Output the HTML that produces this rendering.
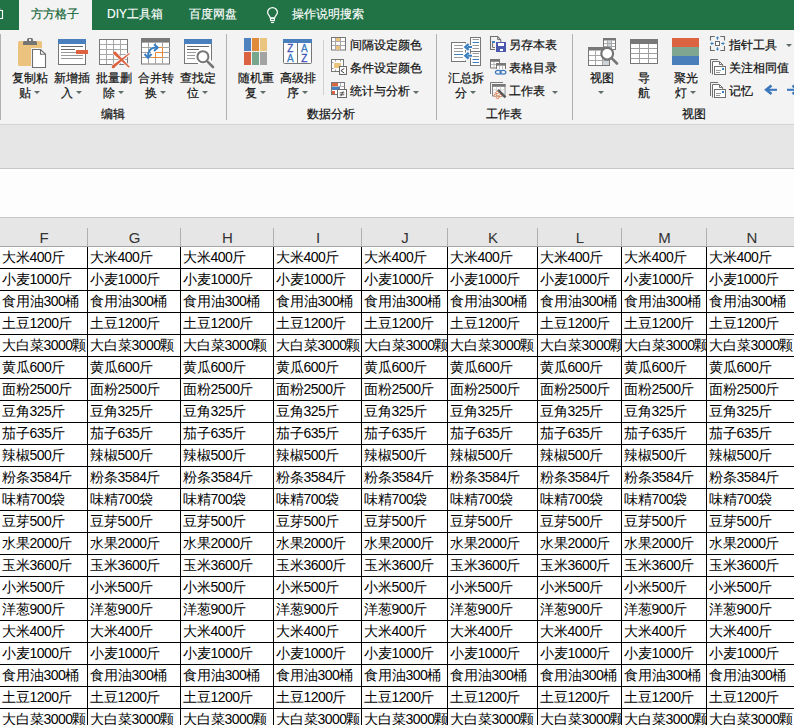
<!DOCTYPE html>
<html><head><meta charset="utf-8"><style>
*{margin:0;padding:0;box-sizing:border-box}
html,body{width:794px;height:725px;overflow:hidden;background:#fff;font-family:"Liberation Sans",sans-serif}
.a{position:absolute}
.t{position:absolute;white-space:nowrap;font-size:12px;line-height:16px;color:#111;-webkit-text-stroke:0.2px #111}
.tab{position:absolute;white-space:nowrap;font-size:12px;line-height:16px;color:#fff;-webkit-text-stroke:0.15px #fff}
.arr{position:absolute;width:0;height:0;border-left:3px solid transparent;border-right:3px solid transparent;border-top:3px solid #5f6d62}
.sep{position:absolute;width:1px;background:#d4d4d4}
.d{letter-spacing:-0.55px}
.cell{position:absolute;white-space:nowrap;font-size:14px;line-height:16px;color:#000;overflow:hidden}
.vl{position:absolute;width:1px;background:#000}
.hl{position:absolute;height:1px;background:#000}
.ch{position:absolute;font-size:15px;line-height:16px;color:#333;text-align:center}
</style></head><body>
<div class="a" style="left:0;top:0;width:794px;height:30px;background:#217346"></div>
<div class="a" style="left:19px;top:0;width:73px;height:31px;background:#f3f3f3"></div>
<svg class="a" style="left:0;top:0" width="6" height="30"><path d="M0 10.5H2.5V18.5H0" fill="none" stroke="#fff" stroke-width="1.1"/><path d="M0 9H0.8" stroke="#aab" stroke-width="1"/></svg>
<div class="tab" style="left:31px;top:6px;color:#1a6b3c;-webkit-text-stroke:0.25px #1a6b3c">方方格子</div>
<div class="tab" style="left:107px;top:6px">DIY工具箱</div>
<div class="tab" style="left:189px;top:6px">百度网盘</div>
<div class="tab" style="left:292px;top:6px">操作说明搜索</div>
<svg class="a" style="left:264px;top:5px" width="18" height="20" viewBox="0 0 18 20"><path d="M6.3 12.8 C6 10.8 3.6 9.6 3.6 7.5 A4.9 4.9 0 0 1 13.4 7.5 C13.4 9.6 11 10.8 10.7 12.8 Z" fill="none" stroke="#fff" stroke-width="1.2"/><rect x="6.6" y="13.6" width="3.8" height="2" fill="none" stroke="#fff" stroke-width="1.1"/><path d="M7 17.5H10" stroke="#fff" stroke-width="1.1"/></svg>
<div class="a" style="left:0;top:30px;width:794px;height:94px;background:#f3f3f3"></div>
<div class="a" style="left:0;top:124px;width:794px;height:1px;background:#d2d2d2"></div>
<div class="a" style="left:0;top:125px;width:794px;height:43px;background:#e6e6e6"></div>
<div class="a" style="left:0;top:168px;width:794px;height:1px;background:#c6c6c6"></div>
<div class="a" style="left:0;top:169px;width:794px;height:48px;background:#fdfdfd"></div>
<div class="a" style="left:0;top:217px;width:794px;height:1px;background:#c6c6c6"></div>
<div class="a" style="left:0;top:218px;width:794px;height:28px;background:#e6e6e6"></div>
<div class="a" style="left:0;top:246px;width:794px;height:1px;background:#a5a5a5"></div>
<div class="sep" style="left:0px;top:34px;height:86px;background:#b0b2b0"></div>
<div class="sep" style="left:226px;top:34px;height:86px;background:#b0b2b0"></div>
<div class="sep" style="left:436px;top:34px;height:86px;background:#b0b2b0"></div>
<div class="sep" style="left:572px;top:34px;height:86px;background:#b0b2b0"></div>
<div class="sep" style="left:323px;top:40px;height:55px;background:#d0d0d0"></div>
<!-- 1 clipboard: origin (18,37) -->
<svg class="a" style="left:18px;top:37px" width="30" height="32" viewBox="0 0 30 32">
<rect x="0" y="4" width="24" height="25" rx="1.5" fill="#ebc37f"/>
<path d="M5 5.5 Q5 4 6.5 4 H17.5 Q19 4 19 5.5 V8 H5 Z" fill="#747474"/>
<rect x="9" y="1" width="6" height="4" rx="1.5" fill="#747474"/>
<rect x="11" y="2" width="2" height="2" fill="#f3f3f3"/>
<path d="M14.5 12.5 H22.5 L27.5 17.3 V30.5 H14.5 Z" fill="#f3f3f3" stroke="#f3f3f3" stroke-width="3"/>
<path d="M14.5 12.5 H22.5 L27.5 17.3 V30.5 H14.5 Z" fill="#fff" stroke="#6e6e6e" stroke-width="1.1" stroke-linejoin="miter"/>
<path d="M22.5 12.5 V17.3 H27.5" fill="none" stroke="#6e6e6e" stroke-width="1.1"/>
</svg>
<!-- 2 insert: origin (57,38) -->
<svg class="a" style="left:57px;top:38px" width="32" height="28" viewBox="0 0 32 28">
<rect x="1.5" y="1.5" width="27" height="25" fill="#fff" stroke="#777" stroke-width="1"/>
<rect x="1" y="1" width="28" height="5" fill="#4a7fbd"/>
<path d="M4 8.5H26M4 11.5H18M4 14.5H19M4 17.5H26M4 20.5H26" stroke="#9a9a9a" stroke-width="1"/>
<path d="M4 8.5H26M4 11.5H18" stroke="#6a6a6a" stroke-width="1"/>
<rect x="19" y="12" width="12" height="4" fill="#dd6340"/>
</svg>
<!-- 3 delete: origin (98,38) -->
<svg class="a" style="left:98px;top:38px" width="34" height="32" viewBox="0 0 34 32">
<rect x="1.5" y="1.5" width="28" height="25" fill="#fff" stroke="#7a7a7a" stroke-width="1"/>
<path d="M8.5 2V26M15.5 2V26M22.5 2V26M2 6.5H29M2 11.5H29M2 16.5H29M2 21.5H29" stroke="#a8a8a8" stroke-width="1"/>
<g stroke="#f8f8f8" stroke-width="1.6" stroke-linejoin="round">
<path d="M15.55 15.97 L17.65 13.83 L31.72 28.87 L30.88 29.73Z" fill="#f8f8f8"/>
<path d="M16.15 29.87 L14.26 27.53 L31.29 15.01 L31.92 15.79Z" fill="#f8f8f8"/>
</g>
<g fill="#dd6340">
<path d="M15.55 15.97 L17.65 13.83 L31.72 28.87 L30.88 29.73Z"/>
<circle cx="16.6" cy="14.9" r="1.5"/>
<path d="M16.15 29.87 L14.26 27.53 L31.29 15.01 L31.92 15.79Z"/>
<circle cx="15.2" cy="28.7" r="1.5"/>
</g>
</svg>
<!-- 4 merge: origin (140,37) -->
<svg class="a" style="left:140px;top:37px" width="32" height="29" viewBox="0 0 32 29">
<rect x="1.5" y="1.5" width="28" height="25.5" fill="#fff" stroke="#767676" stroke-width="1"/>
<rect x="1" y="1" width="29" height="4.6" fill="#797979"/>
<path d="M8.5 5V27M15.5 5V27M22.5 5V27M2 10.5H30M2 15.5H30M2 20.5H30" stroke="#a3a3a3" stroke-width="1"/>
<rect x="11" y="10" width="12" height="11" fill="#fff"/>
<path d="M18.5 10.5H22.5V20.5H11M15.5 20.5V15.5H22.5" fill="none" stroke="#e8893a" stroke-width="1"/>
<path d="M8 20.5 C8 14 10.5 10.6 15.5 10.6 H18" fill="none" stroke="#3a7fc1" stroke-width="2"/>
<path d="M14 7.3 L17.8 10.6 L14 14" fill="none" stroke="#3a7fc1" stroke-width="2"/>
<path d="M4.6 17 L8 20.8 L11.5 17" fill="none" stroke="#3a7fc1" stroke-width="2"/>
</svg>
<!-- 5 find: origin (183,38) -->
<svg class="a" style="left:183px;top:38px" width="34" height="32" viewBox="0 0 34 32">
<rect x="1" y="1" width="28" height="25" fill="#fff"/>
<path d="M1.5 1V26M1 25.5H15M28.5 1V22.5" stroke="#777" fill="none"/>
<rect x="1" y="1" width="28" height="5" fill="#4a7fbd"/>
<path d="M4 8.5H26M4 11.5H16" stroke="#6a6a6a" stroke-width="1"/>
<path d="M4 14.5H13M4 17.5H12M4 20.5H12" stroke="#9a9a9a" stroke-width="1"/>
<circle cx="19.9" cy="18.7" r="5.5" fill="#fff" stroke="#767676" stroke-width="2"/>
<path d="M24.3 23.3 L30 29" stroke="#767676" stroke-width="2.6" stroke-linecap="round"/>
</svg>
<!-- 6 random blocks -->
<svg class="a" style="left:244px;top:38px" width="24" height="28" viewBox="0 0 24 28">
<rect x="0" y="0" width="7" height="13" fill="#4e81bd"/>
<rect x="8" y="0" width="7" height="13" fill="#e08a3b"/>
<rect x="16" y="0" width="7" height="13" fill="#ebc47f"/>
<rect x="0" y="14" width="7" height="13" fill="#dc6341"/>
<rect x="8" y="14" width="7" height="13" fill="#77a68d"/>
<rect x="16" y="14" width="7" height="13" fill="#a3a3a3"/>
</svg>
<!-- 7 sort: origin (282,38) -->
<svg class="a" style="left:282px;top:38px" width="32" height="28" viewBox="0 0 32 28">
<rect x="1.5" y="1.5" width="28" height="24" rx="1" fill="#fff" stroke="#767676" stroke-width="1"/>
<rect x="1" y="1" width="29" height="4" fill="#4a7fbd"/>
<path d="M15.5 5V25.5" stroke="#767676"/>
<g font-family="Liberation Sans" font-size="10" text-anchor="middle" stroke-width="0.3">
<text x="8.3" y="13.8" fill="#3f4fb3" stroke="#3f4fb3">Z</text>
<text x="8.3" y="23.8" fill="#3b7cc0" stroke="#3b7cc0">A</text>
<text x="22.3" y="13.8" fill="#3b7cc0" stroke="#3b7cc0">A</text>
<text x="22.3" y="23.8" fill="#3f4fb3" stroke="#3f4fb3">Z</text>
</g>
</svg>
<!-- 8 interval color: origin (330,36) -->
<svg class="a" style="left:330px;top:36px" width="18" height="16" viewBox="0 0 18 16">
<rect x="1.5" y="1.5" width="14" height="12.5" fill="#fff" stroke="#777"/>
<rect x="6" y="2" width="5" height="3.5" fill="#ebc37f"/>
<rect x="6" y="10" width="5" height="3.5" fill="#ebc37f"/>
<path d="M5.5 2V14M10.5 2V14M2 5.5H15M2 9.5H15" stroke="#a8a8a8"/>
</svg>
<!-- 9 cond color: origin (330,58) -->
<svg class="a" style="left:330px;top:58px" width="18" height="18" viewBox="0 0 18 18">
<rect x="1.5" y="1.5" width="12" height="12" fill="#fff" stroke="#777"/>
<path d="M5.5 2V3.5M10.5 2V3.5M2 4.5H3.5M2 10.5H3.5M5.5 11.5V13" stroke="#999"/>
<rect x="4" y="5" width="7" height="5" fill="#ebc37f"/>
<rect x="9.5" y="8.5" width="7" height="8" fill="#fff" stroke="#6a6a6a"/>
<path d="M14.3 10.4 L10.9 12.7 L14.3 15" fill="none" stroke="#444" stroke-width="1"/>
</svg>
<!-- 10 stats: origin (330,81) -->
<svg class="a" style="left:330px;top:81px" width="18" height="18" viewBox="0 0 18 18">
<rect x="1.5" y="1.5" width="13" height="12" fill="#fff" stroke="#777"/>
<rect x="2" y="2" width="6" height="3" fill="#dd6340"/>
<rect x="2" y="6" width="8" height="3" fill="#4a7fbd"/>
<rect x="2" y="10" width="3" height="3" fill="#dd6340"/>
<path d="M10.5 2V5.5M2 5.5H14" stroke="#b0b0b0"/>
<rect x="7.5" y="8.5" width="9" height="8" fill="#fff" stroke="#6a6a6a"/>
<path d="M9.7 11.8H14.3M9.7 13.8H14.3M13.2 10.3L10.8 15.3" fill="none" stroke="#444" stroke-width="0.9"/>
</svg>
<!-- 11 summary split: origin (450,36) -->
<svg class="a" style="left:450px;top:36px" width="32" height="31" viewBox="0 0 32 31">
<rect x="1.5" y="6.5" width="14" height="19" fill="#fff" stroke="#777"/>
<path d="M4 9.5H13M4 12.5H13M4 15.5H13M4 21.5H13" stroke="#9a9a9a"/>
<path d="M4 18.5H13" stroke="#3a7fc1"/>
<rect x="15" y="7.5" width="2" height="17" fill="#f3f3f3"/>
<path d="M15.5 14V16.5" stroke="#777"/>
<rect x="20.5" y="1.5" width="10" height="14" fill="#fff" stroke="#777"/>
<rect x="20.5" y="15.5" width="10" height="14" fill="#fff" stroke="#777"/>
<path d="M22.5 6.5H29M22.5 23.5H29M22.5 26.5H29" stroke="#3a7fc1"/>
<path d="M22.5 3.5H29M22.5 9.5H29M22.5 12.5H29M22.5 17.5H29M22.5 20.5H29" stroke="#9a9a9a"/>
<rect x="19.5" y="9" width="2" height="4" fill="#fff"/><rect x="19.5" y="17.7" width="2" height="4" fill="#fff"/>
<path d="M22 11H17.5M22 19.7H17.5" stroke="#3a7fc1" stroke-width="2"/>
<path d="M18.7 8L15.3 10.9L18.7 13.8M18.7 16.8L15.3 19.7L18.7 22.6" fill="none" stroke="#3a7fc1" stroke-width="2.2"/>
</svg>
<!-- 12 save sheet: origin (489,35) -->
<svg class="a" style="left:489px;top:35px" width="18" height="18" viewBox="0 0 18 18">
<path d="M6 14.5H1.5V1.5H8.7L11.8 5V7" fill="none" stroke="#707070" stroke-width="1.1"/>
<path d="M8.7 2V4.6H11" fill="none" stroke="#707070" stroke-width="1"/>
<rect x="3" y="6" width="3" height="2" fill="#3a7fc1"/>
<path d="M3.6 8V12.5H6" fill="none" stroke="#707070" stroke-width="1"/>
<rect x="7" y="7" width="10" height="10" fill="#4a58b0"/>
<rect x="9" y="8" width="6" height="3" fill="#fff"/>
<rect x="11" y="14" width="3" height="2" fill="#fff"/>
</svg>
<!-- 13 toc: origin (489,58) -->
<svg class="a" style="left:489px;top:58px" width="18" height="18" viewBox="0 0 18 18">
<rect x="1" y="1" width="10" height="9" fill="#fff"/>
<path d="M1.5 1V10H7M10.5 1V5" fill="none" stroke="#777"/>
<rect x="1" y="1" width="10" height="2.8" fill="#777"/>
<path d="M5 4V10M2 6.5H7" stroke="#b8b8b8"/>
<rect x="7" y="5" width="10" height="6" fill="#fff"/>
<path d="M7.5 5V11M16.5 5V11" stroke="#777"/>
<rect x="7" y="5" width="10" height="2.7" fill="#777"/>
<path d="M10.5 7.7V11M13.5 7.7V11" stroke="#b8b8b8"/>
<ellipse cx="9.3" cy="14.3" rx="2.9" ry="1.9" fill="none" stroke="#3a77bd" stroke-width="1.2"/>
<ellipse cx="14" cy="14.3" rx="2.9" ry="1.9" fill="none" stroke="#3a77bd" stroke-width="1.2"/>
</svg>
<!-- 14 worksheet: origin (489,81) -->
<svg class="a" style="left:489px;top:81px" width="18" height="18" viewBox="0 0 18 18">
<path d="M1.5 13V1.5H14" fill="none" stroke="#7a7a7a"/>
<rect x="3.5" y="3.5" width="12.5" height="11.5" fill="#fff" stroke="#888"/>
<rect x="3" y="3" width="13.5" height="2.8" fill="#777"/>
<path d="M7.5 5.8V15M11.5 5.8V15M4 9H16M4 12H16" stroke="#d0d0d0"/>
<path d="M9 8.8 L16.5 16.3" stroke="#5a5a5a" stroke-width="2.4"/>
<path d="M8.2 10.3l1.4 1.4l-1.4 1.4l-1.4-1.4z M6.2 12.8l1.4 1.4l-1.4 1.4l-1.4-1.4z M11.2 13.3l1.4 1.4l-1.4 1.4l-1.4-1.4z M8.7 15.3l1.4 1.4l-1.4 1.4l-1.4-1.4z" fill="#fff" stroke="#e2692e" stroke-width="0.9"/>
</svg>
<!-- 15 view: origin (587,36) -->
<svg class="a" style="left:587px;top:36px" width="32" height="31" viewBox="0 0 32 31">
<rect x="16.5" y="2.5" width="12" height="11" fill="#fff" stroke="#777"/>
<rect x="16" y="2" width="13" height="2.5" fill="#777"/>
<rect x="21" y="5" width="3" height="8" fill="#cdd4da"/>
<path d="M20.5 4.5V13M24.5 4.5V13M17 7.5H28M17 10.5H28" stroke="#a8a8a8"/>
<rect x="1.5" y="11.5" width="21" height="18" fill="#fff" stroke="#777"/>
<rect x="1" y="11" width="22" height="3.5" fill="#777"/>
<rect x="15" y="24" width="7" height="5" fill="#cdd4da"/>
<path d="M8.5 14.5V29M15.5 14.5V29M2 19.5H22M2 24.5H22" stroke="#a8a8a8"/>
<circle cx="20.2" cy="17.7" r="5.9" fill="#fff" stroke="#767676" stroke-width="2.2"/>
<path d="M24.6 22.1 L30 27.5" stroke="#767676" stroke-width="2.6" stroke-linecap="round"/>
</svg>
<!-- 16 nav: origin (629,38) -->
<svg class="a" style="left:629px;top:38px" width="30" height="27" viewBox="0 0 30 27">
<rect x="1.5" y="1.5" width="27" height="24" fill="#fff" stroke="#777"/>
<rect x="1" y="1" width="28" height="5" fill="#777"/>
<path d="M10.5 6V25M19.5 6V25M2 10.5H28M2 15.5H28M2 20.5H28" stroke="#a0a0a0"/>
</svg>
<!-- 17 spotlight -->
<svg class="a" style="left:672px;top:38px" width="27" height="27" viewBox="0 0 27 27">
<rect x="0" y="0" width="27" height="9" fill="#dc6341"/>
<rect x="0" y="9" width="27" height="9" fill="#7ea690"/>
<rect x="0" y="18" width="27" height="9" fill="#4a7ebb"/>
</svg>
<!-- 18 pointer: origin (709,35) -->
<svg class="a" style="left:709px;top:35px" width="18" height="18" viewBox="0 0 18 18">
<path d="M1.5 5.6V1.5H5.8M11.3 1.5H15.5V5.6M15.5 11V15.5H11.3M5.8 15.5H1.5V11" fill="none" stroke="#6a6a6a" stroke-width="1.1"/>
<rect x="6.5" y="6.5" width="4" height="4" fill="#fff" stroke="#6a6a6a"/>
<path d="M8.5 2V4.8M8.5 12.2V15M2 8.5H4.9M12.1 8.5H15" stroke="#3a7fc1" stroke-width="1.1"/>
<path d="M6.8 3.3L8.5 1.2L10.2 3.3Z M6.8 13.7L8.5 15.8L10.2 13.7Z M3.3 6.8L1.2 8.5L3.3 10.2Z M13.7 6.8L15.8 8.5L13.7 10.2Z" fill="#3a7fc1"/>
</svg>
<!-- 19 same value: origin (709,58) -->
<svg class="a" style="left:709px;top:58px" width="18" height="18" viewBox="0 0 18 18">
<path d="M1.5 15V1.5H9" fill="none" stroke="#707070"/>
<path d="M3.5 16.5V3.5H10.5L13.7 6.7V8.5" fill="#fff" stroke="#707070"/>
<path d="M10.5 4V6.5H13.5" fill="none" stroke="#707070"/>
<rect x="5.5" y="8.5" width="11" height="8" fill="#fff" stroke="#707070"/>
<path d="M7 12.5H12M7 14.5H11" stroke="#999"/>
<rect x="13" y="10" width="2" height="2" fill="#3a7fc1"/>
</svg>
<!-- 20 memory: origin (709,81) -->
<svg class="a" style="left:709px;top:81px" width="18" height="18" viewBox="0 0 18 18">
<path d="M1.5 15V1.5H9" fill="none" stroke="#707070"/>
<path d="M3.5 16.5V3.5H10.5L13.7 6.7V8.5" fill="#fff" stroke="#707070"/>
<path d="M10.5 4V6.5H13.5" fill="none" stroke="#707070"/>
<rect x="5.5" y="8.5" width="11" height="8" fill="#fff" stroke="#707070"/>
<path d="M7 12.5H12M7 14.5H11" stroke="#999"/>
<rect x="13" y="10" width="2" height="2" fill="#3a7fc1"/>
</svg>
<!-- arrows -->
<svg class="a" style="left:763px;top:84px" width="31" height="13" viewBox="0 0 31 13">
<path d="M3 5.8H14" stroke="#3a77bd" stroke-width="2.1"/>
<path d="M8.5 1.6L3.2 5.8L8.5 10" fill="none" stroke="#3a77bd" stroke-width="2.6"/>
<path d="M24 5.8H35" stroke="#3a77bd" stroke-width="2.1"/>
<path d="M29.5 1.6L34.8 5.8L29.5 10" fill="none" stroke="#3a77bd" stroke-width="2.6"/>
</svg>

<div class="t" style="left:12px;top:70px">复制粘</div>
<div class="t" style="left:19px;top:85px">贴</div>
<div class="t" style="left:54px;top:70px">新增插</div>
<div class="t" style="left:61px;top:85px">入</div>
<div class="t" style="left:96px;top:70px">批量删</div>
<div class="t" style="left:103px;top:85px">除</div>
<div class="t" style="left:138px;top:70px">合并转</div>
<div class="t" style="left:145px;top:85px">换</div>
<div class="t" style="left:180px;top:70px">查找定</div>
<div class="t" style="left:187px;top:85px">位</div>
<div class="t" style="left:238px;top:70px">随机重</div>
<div class="t" style="left:245px;top:85px">复</div>
<div class="t" style="left:280px;top:70px">高级排</div>
<div class="t" style="left:287px;top:85px">序</div>
<div class="t" style="left:350px;top:37px">间隔设定颜色</div>
<div class="t" style="left:350px;top:60px">条件设定颜色</div>
<div class="t" style="left:350px;top:83px">统计与分析</div>
<div class="t" style="left:448px;top:70px">汇总拆</div>
<div class="t" style="left:455px;top:85px">分</div>
<div class="t" style="left:509px;top:37px">另存本表</div>
<div class="t" style="left:509px;top:60px">表格目录</div>
<div class="t" style="left:509px;top:83px">工作表</div>
<div class="t" style="left:590px;top:70px">视图</div>
<div class="t" style="left:638px;top:70px">导</div>
<div class="t" style="left:638px;top:85px">航</div>
<div class="t" style="left:674px;top:70px">聚光</div>
<div class="t" style="left:675px;top:85px">灯</div>
<div class="t" style="left:729px;top:37px">指针工具</div>
<div class="t" style="left:729px;top:60px">关注相同值</div>
<div class="t" style="left:729px;top:83px">记忆</div>
<div class="t" style="left:101px;top:106px">编辑</div>
<div class="t" style="left:307px;top:106px">数据分析</div>
<div class="t" style="left:486px;top:106px">工作表</div>
<div class="t" style="left:682px;top:106px">视图</div>
<div class="arr" style="left:34px;top:91px"></div>
<div class="arr" style="left:76px;top:91px"></div>
<div class="arr" style="left:118px;top:91px"></div>
<div class="arr" style="left:160px;top:91px"></div>
<div class="arr" style="left:202px;top:91px"></div>
<div class="arr" style="left:260px;top:91px"></div>
<div class="arr" style="left:302px;top:91px"></div>
<div class="arr" style="left:413px;top:91px"></div>
<div class="arr" style="left:470px;top:91px"></div>
<div class="arr" style="left:552px;top:91px"></div>
<div class="arr" style="left:598px;top:91px"></div>
<div class="arr" style="left:690px;top:91px"></div>
<div class="arr" style="left:786px;top:44px"></div>
<div class="ch" style="left:0px;top:230px;width:88px">F</div>
<div class="ch" style="left:88px;top:230px;width:93px">G</div>
<div class="a" style="left:87px;top:228px;width:1px;height:18px;background:#b0b0b0"></div>
<div class="ch" style="left:181px;top:230px;width:93px">H</div>
<div class="a" style="left:180px;top:228px;width:1px;height:18px;background:#b0b0b0"></div>
<div class="ch" style="left:274px;top:230px;width:88px">I</div>
<div class="a" style="left:273px;top:228px;width:1px;height:18px;background:#b0b0b0"></div>
<div class="ch" style="left:362px;top:230px;width:86px">J</div>
<div class="a" style="left:361px;top:228px;width:1px;height:18px;background:#b0b0b0"></div>
<div class="ch" style="left:448px;top:230px;width:90px">K</div>
<div class="a" style="left:447px;top:228px;width:1px;height:18px;background:#b0b0b0"></div>
<div class="ch" style="left:538px;top:230px;width:84px">L</div>
<div class="a" style="left:537px;top:228px;width:1px;height:18px;background:#b0b0b0"></div>
<div class="ch" style="left:622px;top:230px;width:85px">M</div>
<div class="a" style="left:621px;top:228px;width:1px;height:18px;background:#b0b0b0"></div>
<div class="ch" style="left:707px;top:230px;width:90px">N</div>
<div class="a" style="left:706px;top:228px;width:1px;height:18px;background:#b0b0b0"></div>
<div class="cell" style="left:0px;top:249px;width:87px;padding-left:1.5px">大米<span class="d">400</span>斤</div>
<div class="cell" style="left:88px;top:249px;width:92px;padding-left:1.5px">大米<span class="d">400</span>斤</div>
<div class="cell" style="left:181px;top:249px;width:92px;padding-left:1.5px">大米<span class="d">400</span>斤</div>
<div class="cell" style="left:274px;top:249px;width:87px;padding-left:1.5px">大米<span class="d">400</span>斤</div>
<div class="cell" style="left:362px;top:249px;width:85px;padding-left:1.5px">大米<span class="d">400</span>斤</div>
<div class="cell" style="left:448px;top:249px;width:89px;padding-left:1.5px">大米<span class="d">400</span>斤</div>
<div class="cell" style="left:538px;top:249px;width:83px;padding-left:1.5px">大米<span class="d">400</span>斤</div>
<div class="cell" style="left:622px;top:249px;width:84px;padding-left:1.5px">大米<span class="d">400</span>斤</div>
<div class="cell" style="left:707px;top:249px;width:89px;padding-left:1.5px">大米<span class="d">400</span>斤</div>
<div class="cell" style="left:0px;top:271px;width:87px;padding-left:1.5px">小麦<span class="d">1000</span>斤</div>
<div class="cell" style="left:88px;top:271px;width:92px;padding-left:1.5px">小麦<span class="d">1000</span>斤</div>
<div class="cell" style="left:181px;top:271px;width:92px;padding-left:1.5px">小麦<span class="d">1000</span>斤</div>
<div class="cell" style="left:274px;top:271px;width:87px;padding-left:1.5px">小麦<span class="d">1000</span>斤</div>
<div class="cell" style="left:362px;top:271px;width:85px;padding-left:1.5px">小麦<span class="d">1000</span>斤</div>
<div class="cell" style="left:448px;top:271px;width:89px;padding-left:1.5px">小麦<span class="d">1000</span>斤</div>
<div class="cell" style="left:538px;top:271px;width:83px;padding-left:1.5px">小麦<span class="d">1000</span>斤</div>
<div class="cell" style="left:622px;top:271px;width:84px;padding-left:1.5px">小麦<span class="d">1000</span>斤</div>
<div class="cell" style="left:707px;top:271px;width:89px;padding-left:1.5px">小麦<span class="d">1000</span>斤</div>
<div class="cell" style="left:0px;top:293px;width:87px;padding-left:1.5px">食用油<span class="d">300</span>桶</div>
<div class="cell" style="left:88px;top:293px;width:92px;padding-left:1.5px">食用油<span class="d">300</span>桶</div>
<div class="cell" style="left:181px;top:293px;width:92px;padding-left:1.5px">食用油<span class="d">300</span>桶</div>
<div class="cell" style="left:274px;top:293px;width:87px;padding-left:1.5px">食用油<span class="d">300</span>桶</div>
<div class="cell" style="left:362px;top:293px;width:85px;padding-left:1.5px">食用油<span class="d">300</span>桶</div>
<div class="cell" style="left:448px;top:293px;width:89px;padding-left:1.5px">食用油<span class="d">300</span>桶</div>
<div class="cell" style="left:538px;top:293px;width:83px;padding-left:1.5px">食用油<span class="d">300</span>桶</div>
<div class="cell" style="left:622px;top:293px;width:84px;padding-left:1.5px">食用油<span class="d">300</span>桶</div>
<div class="cell" style="left:707px;top:293px;width:89px;padding-left:1.5px">食用油<span class="d">300</span>桶</div>
<div class="cell" style="left:0px;top:315px;width:87px;padding-left:1.5px">土豆<span class="d">1200</span>斤</div>
<div class="cell" style="left:88px;top:315px;width:92px;padding-left:1.5px">土豆<span class="d">1200</span>斤</div>
<div class="cell" style="left:181px;top:315px;width:92px;padding-left:1.5px">土豆<span class="d">1200</span>斤</div>
<div class="cell" style="left:274px;top:315px;width:87px;padding-left:1.5px">土豆<span class="d">1200</span>斤</div>
<div class="cell" style="left:362px;top:315px;width:85px;padding-left:1.5px">土豆<span class="d">1200</span>斤</div>
<div class="cell" style="left:448px;top:315px;width:89px;padding-left:1.5px">土豆<span class="d">1200</span>斤</div>
<div class="cell" style="left:538px;top:315px;width:83px;padding-left:1.5px">土豆<span class="d">1200</span>斤</div>
<div class="cell" style="left:622px;top:315px;width:84px;padding-left:1.5px">土豆<span class="d">1200</span>斤</div>
<div class="cell" style="left:707px;top:315px;width:89px;padding-left:1.5px">土豆<span class="d">1200</span>斤</div>
<div class="cell" style="left:0px;top:337px;width:87px;padding-left:1.5px">大白菜<span class="d">3000</span>颗</div>
<div class="cell" style="left:88px;top:337px;width:92px;padding-left:1.5px">大白菜<span class="d">3000</span>颗</div>
<div class="cell" style="left:181px;top:337px;width:92px;padding-left:1.5px">大白菜<span class="d">3000</span>颗</div>
<div class="cell" style="left:274px;top:337px;width:87px;padding-left:1.5px">大白菜<span class="d">3000</span>颗</div>
<div class="cell" style="left:362px;top:337px;width:85px;padding-left:1.5px">大白菜<span class="d">3000</span>颗</div>
<div class="cell" style="left:448px;top:337px;width:89px;padding-left:1.5px">大白菜<span class="d">3000</span>颗</div>
<div class="cell" style="left:538px;top:337px;width:83px;padding-left:1.5px">大白菜<span class="d">3000</span>颗</div>
<div class="cell" style="left:622px;top:337px;width:84px;padding-left:1.5px">大白菜<span class="d">3000</span>颗</div>
<div class="cell" style="left:707px;top:337px;width:89px;padding-left:1.5px">大白菜<span class="d">3000</span>颗</div>
<div class="cell" style="left:0px;top:359px;width:87px;padding-left:1.5px">黄瓜<span class="d">600</span>斤</div>
<div class="cell" style="left:88px;top:359px;width:92px;padding-left:1.5px">黄瓜<span class="d">600</span>斤</div>
<div class="cell" style="left:181px;top:359px;width:92px;padding-left:1.5px">黄瓜<span class="d">600</span>斤</div>
<div class="cell" style="left:274px;top:359px;width:87px;padding-left:1.5px">黄瓜<span class="d">600</span>斤</div>
<div class="cell" style="left:362px;top:359px;width:85px;padding-left:1.5px">黄瓜<span class="d">600</span>斤</div>
<div class="cell" style="left:448px;top:359px;width:89px;padding-left:1.5px">黄瓜<span class="d">600</span>斤</div>
<div class="cell" style="left:538px;top:359px;width:83px;padding-left:1.5px">黄瓜<span class="d">600</span>斤</div>
<div class="cell" style="left:622px;top:359px;width:84px;padding-left:1.5px">黄瓜<span class="d">600</span>斤</div>
<div class="cell" style="left:707px;top:359px;width:89px;padding-left:1.5px">黄瓜<span class="d">600</span>斤</div>
<div class="cell" style="left:0px;top:381px;width:87px;padding-left:1.5px">面粉<span class="d">2500</span>斤</div>
<div class="cell" style="left:88px;top:381px;width:92px;padding-left:1.5px">面粉<span class="d">2500</span>斤</div>
<div class="cell" style="left:181px;top:381px;width:92px;padding-left:1.5px">面粉<span class="d">2500</span>斤</div>
<div class="cell" style="left:274px;top:381px;width:87px;padding-left:1.5px">面粉<span class="d">2500</span>斤</div>
<div class="cell" style="left:362px;top:381px;width:85px;padding-left:1.5px">面粉<span class="d">2500</span>斤</div>
<div class="cell" style="left:448px;top:381px;width:89px;padding-left:1.5px">面粉<span class="d">2500</span>斤</div>
<div class="cell" style="left:538px;top:381px;width:83px;padding-left:1.5px">面粉<span class="d">2500</span>斤</div>
<div class="cell" style="left:622px;top:381px;width:84px;padding-left:1.5px">面粉<span class="d">2500</span>斤</div>
<div class="cell" style="left:707px;top:381px;width:89px;padding-left:1.5px">面粉<span class="d">2500</span>斤</div>
<div class="cell" style="left:0px;top:403px;width:87px;padding-left:1.5px">豆角<span class="d">325</span>斤</div>
<div class="cell" style="left:88px;top:403px;width:92px;padding-left:1.5px">豆角<span class="d">325</span>斤</div>
<div class="cell" style="left:181px;top:403px;width:92px;padding-left:1.5px">豆角<span class="d">325</span>斤</div>
<div class="cell" style="left:274px;top:403px;width:87px;padding-left:1.5px">豆角<span class="d">325</span>斤</div>
<div class="cell" style="left:362px;top:403px;width:85px;padding-left:1.5px">豆角<span class="d">325</span>斤</div>
<div class="cell" style="left:448px;top:403px;width:89px;padding-left:1.5px">豆角<span class="d">325</span>斤</div>
<div class="cell" style="left:538px;top:403px;width:83px;padding-left:1.5px">豆角<span class="d">325</span>斤</div>
<div class="cell" style="left:622px;top:403px;width:84px;padding-left:1.5px">豆角<span class="d">325</span>斤</div>
<div class="cell" style="left:707px;top:403px;width:89px;padding-left:1.5px">豆角<span class="d">325</span>斤</div>
<div class="cell" style="left:0px;top:425px;width:87px;padding-left:1.5px">茄子<span class="d">635</span>斤</div>
<div class="cell" style="left:88px;top:425px;width:92px;padding-left:1.5px">茄子<span class="d">635</span>斤</div>
<div class="cell" style="left:181px;top:425px;width:92px;padding-left:1.5px">茄子<span class="d">635</span>斤</div>
<div class="cell" style="left:274px;top:425px;width:87px;padding-left:1.5px">茄子<span class="d">635</span>斤</div>
<div class="cell" style="left:362px;top:425px;width:85px;padding-left:1.5px">茄子<span class="d">635</span>斤</div>
<div class="cell" style="left:448px;top:425px;width:89px;padding-left:1.5px">茄子<span class="d">635</span>斤</div>
<div class="cell" style="left:538px;top:425px;width:83px;padding-left:1.5px">茄子<span class="d">635</span>斤</div>
<div class="cell" style="left:622px;top:425px;width:84px;padding-left:1.5px">茄子<span class="d">635</span>斤</div>
<div class="cell" style="left:707px;top:425px;width:89px;padding-left:1.5px">茄子<span class="d">635</span>斤</div>
<div class="cell" style="left:0px;top:447px;width:87px;padding-left:1.5px">辣椒<span class="d">500</span>斤</div>
<div class="cell" style="left:88px;top:447px;width:92px;padding-left:1.5px">辣椒<span class="d">500</span>斤</div>
<div class="cell" style="left:181px;top:447px;width:92px;padding-left:1.5px">辣椒<span class="d">500</span>斤</div>
<div class="cell" style="left:274px;top:447px;width:87px;padding-left:1.5px">辣椒<span class="d">500</span>斤</div>
<div class="cell" style="left:362px;top:447px;width:85px;padding-left:1.5px">辣椒<span class="d">500</span>斤</div>
<div class="cell" style="left:448px;top:447px;width:89px;padding-left:1.5px">辣椒<span class="d">500</span>斤</div>
<div class="cell" style="left:538px;top:447px;width:83px;padding-left:1.5px">辣椒<span class="d">500</span>斤</div>
<div class="cell" style="left:622px;top:447px;width:84px;padding-left:1.5px">辣椒<span class="d">500</span>斤</div>
<div class="cell" style="left:707px;top:447px;width:89px;padding-left:1.5px">辣椒<span class="d">500</span>斤</div>
<div class="cell" style="left:0px;top:469px;width:87px;padding-left:1.5px">粉条<span class="d">3584</span>斤</div>
<div class="cell" style="left:88px;top:469px;width:92px;padding-left:1.5px">粉条<span class="d">3584</span>斤</div>
<div class="cell" style="left:181px;top:469px;width:92px;padding-left:1.5px">粉条<span class="d">3584</span>斤</div>
<div class="cell" style="left:274px;top:469px;width:87px;padding-left:1.5px">粉条<span class="d">3584</span>斤</div>
<div class="cell" style="left:362px;top:469px;width:85px;padding-left:1.5px">粉条<span class="d">3584</span>斤</div>
<div class="cell" style="left:448px;top:469px;width:89px;padding-left:1.5px">粉条<span class="d">3584</span>斤</div>
<div class="cell" style="left:538px;top:469px;width:83px;padding-left:1.5px">粉条<span class="d">3584</span>斤</div>
<div class="cell" style="left:622px;top:469px;width:84px;padding-left:1.5px">粉条<span class="d">3584</span>斤</div>
<div class="cell" style="left:707px;top:469px;width:89px;padding-left:1.5px">粉条<span class="d">3584</span>斤</div>
<div class="cell" style="left:0px;top:491px;width:87px;padding-left:1.5px">味精<span class="d">700</span>袋</div>
<div class="cell" style="left:88px;top:491px;width:92px;padding-left:1.5px">味精<span class="d">700</span>袋</div>
<div class="cell" style="left:181px;top:491px;width:92px;padding-left:1.5px">味精<span class="d">700</span>袋</div>
<div class="cell" style="left:274px;top:491px;width:87px;padding-left:1.5px">味精<span class="d">700</span>袋</div>
<div class="cell" style="left:362px;top:491px;width:85px;padding-left:1.5px">味精<span class="d">700</span>袋</div>
<div class="cell" style="left:448px;top:491px;width:89px;padding-left:1.5px">味精<span class="d">700</span>袋</div>
<div class="cell" style="left:538px;top:491px;width:83px;padding-left:1.5px">味精<span class="d">700</span>袋</div>
<div class="cell" style="left:622px;top:491px;width:84px;padding-left:1.5px">味精<span class="d">700</span>袋</div>
<div class="cell" style="left:707px;top:491px;width:89px;padding-left:1.5px">味精<span class="d">700</span>袋</div>
<div class="cell" style="left:0px;top:513px;width:87px;padding-left:1.5px">豆芽<span class="d">500</span>斤</div>
<div class="cell" style="left:88px;top:513px;width:92px;padding-left:1.5px">豆芽<span class="d">500</span>斤</div>
<div class="cell" style="left:181px;top:513px;width:92px;padding-left:1.5px">豆芽<span class="d">500</span>斤</div>
<div class="cell" style="left:274px;top:513px;width:87px;padding-left:1.5px">豆芽<span class="d">500</span>斤</div>
<div class="cell" style="left:362px;top:513px;width:85px;padding-left:1.5px">豆芽<span class="d">500</span>斤</div>
<div class="cell" style="left:448px;top:513px;width:89px;padding-left:1.5px">豆芽<span class="d">500</span>斤</div>
<div class="cell" style="left:538px;top:513px;width:83px;padding-left:1.5px">豆芽<span class="d">500</span>斤</div>
<div class="cell" style="left:622px;top:513px;width:84px;padding-left:1.5px">豆芽<span class="d">500</span>斤</div>
<div class="cell" style="left:707px;top:513px;width:89px;padding-left:1.5px">豆芽<span class="d">500</span>斤</div>
<div class="cell" style="left:0px;top:535px;width:87px;padding-left:1.5px">水果<span class="d">2000</span>斤</div>
<div class="cell" style="left:88px;top:535px;width:92px;padding-left:1.5px">水果<span class="d">2000</span>斤</div>
<div class="cell" style="left:181px;top:535px;width:92px;padding-left:1.5px">水果<span class="d">2000</span>斤</div>
<div class="cell" style="left:274px;top:535px;width:87px;padding-left:1.5px">水果<span class="d">2000</span>斤</div>
<div class="cell" style="left:362px;top:535px;width:85px;padding-left:1.5px">水果<span class="d">2000</span>斤</div>
<div class="cell" style="left:448px;top:535px;width:89px;padding-left:1.5px">水果<span class="d">2000</span>斤</div>
<div class="cell" style="left:538px;top:535px;width:83px;padding-left:1.5px">水果<span class="d">2000</span>斤</div>
<div class="cell" style="left:622px;top:535px;width:84px;padding-left:1.5px">水果<span class="d">2000</span>斤</div>
<div class="cell" style="left:707px;top:535px;width:89px;padding-left:1.5px">水果<span class="d">2000</span>斤</div>
<div class="cell" style="left:0px;top:557px;width:87px;padding-left:1.5px">玉米<span class="d">3600</span>斤</div>
<div class="cell" style="left:88px;top:557px;width:92px;padding-left:1.5px">玉米<span class="d">3600</span>斤</div>
<div class="cell" style="left:181px;top:557px;width:92px;padding-left:1.5px">玉米<span class="d">3600</span>斤</div>
<div class="cell" style="left:274px;top:557px;width:87px;padding-left:1.5px">玉米<span class="d">3600</span>斤</div>
<div class="cell" style="left:362px;top:557px;width:85px;padding-left:1.5px">玉米<span class="d">3600</span>斤</div>
<div class="cell" style="left:448px;top:557px;width:89px;padding-left:1.5px">玉米<span class="d">3600</span>斤</div>
<div class="cell" style="left:538px;top:557px;width:83px;padding-left:1.5px">玉米<span class="d">3600</span>斤</div>
<div class="cell" style="left:622px;top:557px;width:84px;padding-left:1.5px">玉米<span class="d">3600</span>斤</div>
<div class="cell" style="left:707px;top:557px;width:89px;padding-left:1.5px">玉米<span class="d">3600</span>斤</div>
<div class="cell" style="left:0px;top:579px;width:87px;padding-left:1.5px">小米<span class="d">500</span>斤</div>
<div class="cell" style="left:88px;top:579px;width:92px;padding-left:1.5px">小米<span class="d">500</span>斤</div>
<div class="cell" style="left:181px;top:579px;width:92px;padding-left:1.5px">小米<span class="d">500</span>斤</div>
<div class="cell" style="left:274px;top:579px;width:87px;padding-left:1.5px">小米<span class="d">500</span>斤</div>
<div class="cell" style="left:362px;top:579px;width:85px;padding-left:1.5px">小米<span class="d">500</span>斤</div>
<div class="cell" style="left:448px;top:579px;width:89px;padding-left:1.5px">小米<span class="d">500</span>斤</div>
<div class="cell" style="left:538px;top:579px;width:83px;padding-left:1.5px">小米<span class="d">500</span>斤</div>
<div class="cell" style="left:622px;top:579px;width:84px;padding-left:1.5px">小米<span class="d">500</span>斤</div>
<div class="cell" style="left:707px;top:579px;width:89px;padding-left:1.5px">小米<span class="d">500</span>斤</div>
<div class="cell" style="left:0px;top:601px;width:87px;padding-left:1.5px">洋葱<span class="d">900</span>斤</div>
<div class="cell" style="left:88px;top:601px;width:92px;padding-left:1.5px">洋葱<span class="d">900</span>斤</div>
<div class="cell" style="left:181px;top:601px;width:92px;padding-left:1.5px">洋葱<span class="d">900</span>斤</div>
<div class="cell" style="left:274px;top:601px;width:87px;padding-left:1.5px">洋葱<span class="d">900</span>斤</div>
<div class="cell" style="left:362px;top:601px;width:85px;padding-left:1.5px">洋葱<span class="d">900</span>斤</div>
<div class="cell" style="left:448px;top:601px;width:89px;padding-left:1.5px">洋葱<span class="d">900</span>斤</div>
<div class="cell" style="left:538px;top:601px;width:83px;padding-left:1.5px">洋葱<span class="d">900</span>斤</div>
<div class="cell" style="left:622px;top:601px;width:84px;padding-left:1.5px">洋葱<span class="d">900</span>斤</div>
<div class="cell" style="left:707px;top:601px;width:89px;padding-left:1.5px">洋葱<span class="d">900</span>斤</div>
<div class="cell" style="left:0px;top:623px;width:87px;padding-left:1.5px">大米<span class="d">400</span>斤</div>
<div class="cell" style="left:88px;top:623px;width:92px;padding-left:1.5px">大米<span class="d">400</span>斤</div>
<div class="cell" style="left:181px;top:623px;width:92px;padding-left:1.5px">大米<span class="d">400</span>斤</div>
<div class="cell" style="left:274px;top:623px;width:87px;padding-left:1.5px">大米<span class="d">400</span>斤</div>
<div class="cell" style="left:362px;top:623px;width:85px;padding-left:1.5px">大米<span class="d">400</span>斤</div>
<div class="cell" style="left:448px;top:623px;width:89px;padding-left:1.5px">大米<span class="d">400</span>斤</div>
<div class="cell" style="left:538px;top:623px;width:83px;padding-left:1.5px">大米<span class="d">400</span>斤</div>
<div class="cell" style="left:622px;top:623px;width:84px;padding-left:1.5px">大米<span class="d">400</span>斤</div>
<div class="cell" style="left:707px;top:623px;width:89px;padding-left:1.5px">大米<span class="d">400</span>斤</div>
<div class="cell" style="left:0px;top:645px;width:87px;padding-left:1.5px">小麦<span class="d">1000</span>斤</div>
<div class="cell" style="left:88px;top:645px;width:92px;padding-left:1.5px">小麦<span class="d">1000</span>斤</div>
<div class="cell" style="left:181px;top:645px;width:92px;padding-left:1.5px">小麦<span class="d">1000</span>斤</div>
<div class="cell" style="left:274px;top:645px;width:87px;padding-left:1.5px">小麦<span class="d">1000</span>斤</div>
<div class="cell" style="left:362px;top:645px;width:85px;padding-left:1.5px">小麦<span class="d">1000</span>斤</div>
<div class="cell" style="left:448px;top:645px;width:89px;padding-left:1.5px">小麦<span class="d">1000</span>斤</div>
<div class="cell" style="left:538px;top:645px;width:83px;padding-left:1.5px">小麦<span class="d">1000</span>斤</div>
<div class="cell" style="left:622px;top:645px;width:84px;padding-left:1.5px">小麦<span class="d">1000</span>斤</div>
<div class="cell" style="left:707px;top:645px;width:89px;padding-left:1.5px">小麦<span class="d">1000</span>斤</div>
<div class="cell" style="left:0px;top:667px;width:87px;padding-left:1.5px">食用油<span class="d">300</span>桶</div>
<div class="cell" style="left:88px;top:667px;width:92px;padding-left:1.5px">食用油<span class="d">300</span>桶</div>
<div class="cell" style="left:181px;top:667px;width:92px;padding-left:1.5px">食用油<span class="d">300</span>桶</div>
<div class="cell" style="left:274px;top:667px;width:87px;padding-left:1.5px">食用油<span class="d">300</span>桶</div>
<div class="cell" style="left:362px;top:667px;width:85px;padding-left:1.5px">食用油<span class="d">300</span>桶</div>
<div class="cell" style="left:448px;top:667px;width:89px;padding-left:1.5px">食用油<span class="d">300</span>桶</div>
<div class="cell" style="left:538px;top:667px;width:83px;padding-left:1.5px">食用油<span class="d">300</span>桶</div>
<div class="cell" style="left:622px;top:667px;width:84px;padding-left:1.5px">食用油<span class="d">300</span>桶</div>
<div class="cell" style="left:707px;top:667px;width:89px;padding-left:1.5px">食用油<span class="d">300</span>桶</div>
<div class="cell" style="left:0px;top:689px;width:87px;padding-left:1.5px">土豆<span class="d">1200</span>斤</div>
<div class="cell" style="left:88px;top:689px;width:92px;padding-left:1.5px">土豆<span class="d">1200</span>斤</div>
<div class="cell" style="left:181px;top:689px;width:92px;padding-left:1.5px">土豆<span class="d">1200</span>斤</div>
<div class="cell" style="left:274px;top:689px;width:87px;padding-left:1.5px">土豆<span class="d">1200</span>斤</div>
<div class="cell" style="left:362px;top:689px;width:85px;padding-left:1.5px">土豆<span class="d">1200</span>斤</div>
<div class="cell" style="left:448px;top:689px;width:89px;padding-left:1.5px">土豆<span class="d">1200</span>斤</div>
<div class="cell" style="left:538px;top:689px;width:83px;padding-left:1.5px">土豆<span class="d">1200</span>斤</div>
<div class="cell" style="left:622px;top:689px;width:84px;padding-left:1.5px">土豆<span class="d">1200</span>斤</div>
<div class="cell" style="left:707px;top:689px;width:89px;padding-left:1.5px">土豆<span class="d">1200</span>斤</div>
<div class="cell" style="left:0px;top:711px;width:87px;padding-left:1.5px">大白菜<span class="d">3000</span>颗</div>
<div class="cell" style="left:88px;top:711px;width:92px;padding-left:1.5px">大白菜<span class="d">3000</span>颗</div>
<div class="cell" style="left:181px;top:711px;width:92px;padding-left:1.5px">大白菜<span class="d">3000</span>颗</div>
<div class="cell" style="left:274px;top:711px;width:87px;padding-left:1.5px">大白菜<span class="d">3000</span>颗</div>
<div class="cell" style="left:362px;top:711px;width:85px;padding-left:1.5px">大白菜<span class="d">3000</span>颗</div>
<div class="cell" style="left:448px;top:711px;width:89px;padding-left:1.5px">大白菜<span class="d">3000</span>颗</div>
<div class="cell" style="left:538px;top:711px;width:83px;padding-left:1.5px">大白菜<span class="d">3000</span>颗</div>
<div class="cell" style="left:622px;top:711px;width:84px;padding-left:1.5px">大白菜<span class="d">3000</span>颗</div>
<div class="cell" style="left:707px;top:711px;width:89px;padding-left:1.5px">大白菜<span class="d">3000</span>颗</div>
<div class="vl" style="left:87px;top:247px;height:478px"></div>
<div class="vl" style="left:180px;top:247px;height:478px"></div>
<div class="vl" style="left:273px;top:247px;height:478px"></div>
<div class="vl" style="left:361px;top:247px;height:478px"></div>
<div class="vl" style="left:447px;top:247px;height:478px"></div>
<div class="vl" style="left:537px;top:247px;height:478px"></div>
<div class="vl" style="left:621px;top:247px;height:478px"></div>
<div class="vl" style="left:706px;top:247px;height:478px"></div>
<div class="hl" style="left:0;top:268px;width:794px"></div>
<div class="hl" style="left:0;top:290px;width:794px"></div>
<div class="hl" style="left:0;top:312px;width:794px"></div>
<div class="hl" style="left:0;top:334px;width:794px"></div>
<div class="hl" style="left:0;top:356px;width:794px"></div>
<div class="hl" style="left:0;top:378px;width:794px"></div>
<div class="hl" style="left:0;top:400px;width:794px"></div>
<div class="hl" style="left:0;top:422px;width:794px"></div>
<div class="hl" style="left:0;top:444px;width:794px"></div>
<div class="hl" style="left:0;top:466px;width:794px"></div>
<div class="hl" style="left:0;top:488px;width:794px"></div>
<div class="hl" style="left:0;top:510px;width:794px"></div>
<div class="hl" style="left:0;top:532px;width:794px"></div>
<div class="hl" style="left:0;top:554px;width:794px"></div>
<div class="hl" style="left:0;top:576px;width:794px"></div>
<div class="hl" style="left:0;top:598px;width:794px"></div>
<div class="hl" style="left:0;top:620px;width:794px"></div>
<div class="hl" style="left:0;top:642px;width:794px"></div>
<div class="hl" style="left:0;top:664px;width:794px"></div>
<div class="hl" style="left:0;top:686px;width:794px"></div>
<div class="hl" style="left:0;top:708px;width:794px"></div>
</body></html>
